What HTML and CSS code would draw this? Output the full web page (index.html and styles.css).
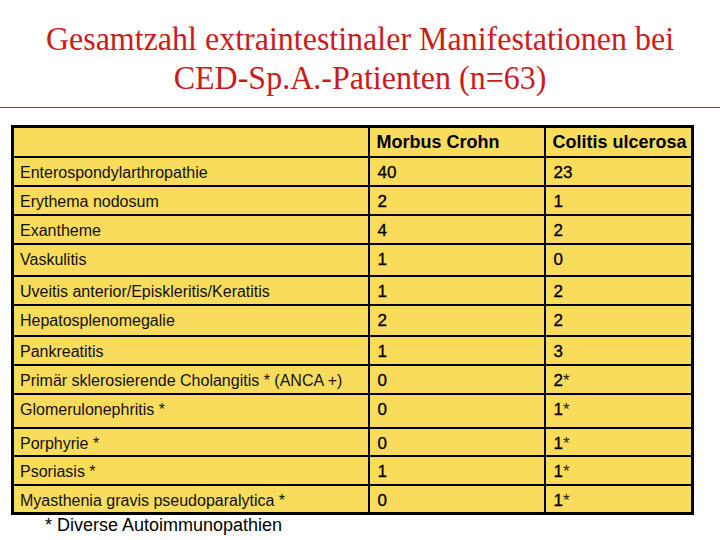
FILE: index.html
```html
<!DOCTYPE html>
<html lang="de">
<head>
<meta charset="utf-8">
<title>Gesamtzahl extraintestinaler Manifestationen</title>
<link rel="stylesheet" href="styles.css">
</head>
<body>
<header class="title">
  <h1>Gesamtzahl extraintestinaler Manifestationen bei<br>CED-Sp.A.-Patienten (n=63)</h1>
</header>
<div class="rule"></div>
<table class="data">
  <colgroup>
    <col class="c1"><col class="c2"><col class="c3">
  </colgroup>
  <thead>
    <tr class="h30"><th></th><th>Morbus Crohn</th><th>Colitis ulcerosa</th></tr>
  </thead>
  <tbody>
    <tr class="h29"><td>Enterospondylarthropathie</td><td class="n">40</td><td class="n">23</td></tr>
    <tr class="h29"><td>Erythema nodosum</td><td class="n">2</td><td class="n">1</td></tr>
    <tr class="h29"><td>Exantheme</td><td class="n">4</td><td class="n">2</td></tr>
    <tr class="h32"><td>Vaskulitis</td><td class="n">1</td><td class="n">0</td></tr>
    <tr class="h29"><td>Uveitis anterior/Episkleritis/Keratitis</td><td class="n">1</td><td class="n">2</td></tr>
    <tr class="h31"><td>Hepatosplenomegalie</td><td class="n">2</td><td class="n">2</td></tr>
    <tr class="h29"><td>Pankreatitis</td><td class="n">1</td><td class="n">3</td></tr>
    <tr class="h29"><td>Primär sklerosierende Cholangitis * (ANCA +)</td><td class="n">0</td><td class="n">2<span class="ast">*</span></td></tr>
    <tr class="h34"><td>Glomerulonephritis *</td><td class="n">0</td><td class="n">1<span class="ast">*</span></td></tr>
    <tr class="h28"><td>Porphyrie *</td><td class="n">0</td><td class="n">1<span class="ast">*</span></td></tr>
    <tr class="h29"><td>Psoriasis *</td><td class="n">1</td><td class="n">1<span class="ast">*</span></td></tr>
    <tr class="h29"><td>Myasthenia gravis pseudoparalytica *</td><td class="n">0</td><td class="n">1<span class="ast">*</span></td></tr>
  </tbody>
</table>
<p class="note">* Diverse Autoimmunopathien</p>
</body>
</html>
```
FILE: styles.css
```css
html, body {
  margin: 0;
  padding: 0;
  background: #ffffff;
}
body {
  width: 720px;
  height: 540px;
  overflow: hidden;
  font-family: "Liberation Sans", Arial, sans-serif;
}
.title {
  padding-top: 19px;
  text-align: center;
}
.title h1 {
  margin: 0;
  font-family: "Liberation Serif", "Times New Roman", serif;
  font-weight: normal;
  font-size: 32px;
  line-height: 37px;
  color: #cc1b1b;
  transform: scaleY(1.06);
  transform-origin: 50% 0;
}
.rule {
  margin-top: 14px;
  height: 1px;
  background: #d02020;
}
.data {
  margin: 17px 0 0 11px;
  border-collapse: collapse;
  table-layout: fixed;
  width: 683px;
  background: #f9dc5c;
  border: 3px solid #000;
  color: #000;
}
.c1 { width: 356px; }
.c2 { width: 176px; }
.c3 { width: 148px; }
.data th, .data td {
  border: 2px solid #000;
  vertical-align: top;
  padding: 0 0 0 7px;
  white-space: nowrap;
}
.data th {
  text-align: left;
  font-size: 18px;
  font-weight: bold;
  line-height: 20px;
  padding-top: 4px;
}
.data td {
  font-size: 16px;
  line-height: 18px;
  padding-top: 6px;
  color: #111;
}
.data td:first-child {
  padding-left: 6px;
}
.data td.n {
  font-size: 17px;
  padding-left: 8px;
  color: #000;
  -webkit-text-stroke: 0.3px #000;
}
.data td.n .ast {
  -webkit-text-stroke: 0;
  color: #222;
}
.h28 { height: 28px; }
.h29 { height: 29px; }
.h30 { height: 30px; }
.h31 { height: 31px; }
.h32 { height: 32px; }
.h34 { height: 34px; }
.note {
  margin: 0;
  padding-left: 45px;
  font-size: 18px;
  line-height: 16px;
  padding-top: 2px;
}
```
